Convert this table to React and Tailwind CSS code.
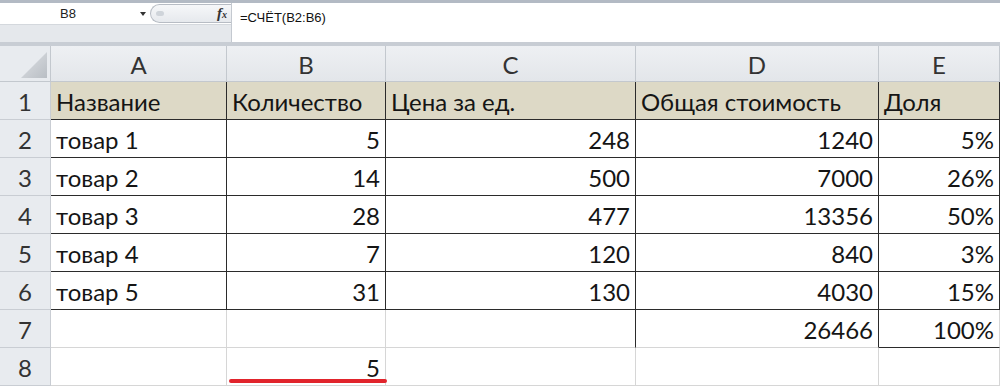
import React from "react";

const cols = ["A", "B", "C", "D", "E"];

const rows = [
  ["Название", "Количество", "Цена за ед.", "Общая стоимость", "Доля"],
  ["товар 1", "5", "248", "1240", "5%"],
  ["товар 2", "14", "500", "7000", "26%"],
  ["товар 3", "28", "477", "13356", "50%"],
  ["товар 4", "7", "120", "840", "3%"],
  ["товар 5", "31", "130", "4030", "15%"],
  ["", "", "", "26466", "100%"],
  ["", "5", "", "", ""],
];

// which cell edges carry the table's dark border
const darkRight = (r, c) => r < 6 || (r === 6 && (c === 2 || c === 3));
const darkBottom = (r, c) => r < 6 || (r === 6 && c === 4);

function DataCell({ r, c, value }) {
  const header = r === 0;
  const alignRight = !header && c > 0;
  const right = darkRight(r, c) ? "border-r-[#2b2b2b]" : "border-r-[#d6d6d6]";
  const bottom = darkBottom(r, c) ? "border-b-[#2b2b2b]" : "border-b-[#d6d6d6]";
  return (
    <div
      className={`flex items-center border-r-[1.5px] border-b-[1.5px] px-[5px] overflow-hidden whitespace-nowrap ${right} ${bottom} ${
        header ? "bg-[#ddd9c6]" : "bg-white"
      } ${alignRight ? "justify-end" : "justify-start"}`}
    >
      <span className="text-[24px] leading-none text-[#151515] pt-[2px]">{value}</span>
    </div>
  );
}

export default function App() {
  return (
    <div
      className="relative w-[1000px] h-[387px] overflow-hidden bg-white"
      style={{ fontFamily: "Lato, 'Liberation Sans', sans-serif" }}
    >
      {/* formula bar */}
      <div className="h-[3px] bg-[#b3bac4]" />
      <div className="flex h-[43px] border-b-[4px] border-[#c8cdd4]">
        <div className="w-[232px] flex flex-col border-r border-[#c4c9d0]">
          <div className="h-[21px] flex items-center bg-white">
            <div
              className="w-[136px] text-center text-[13px] text-[#222]"
              style={{ fontFamily: "'Liberation Sans', sans-serif" }}
            >
              B8
            </div>
            <div className="w-[14px] flex justify-center">
              <div className="w-0 h-0 border-l-[3px] border-r-[3px] border-t-[4px] border-l-transparent border-r-transparent border-t-[#333]" />
            </div>
            <div className="flex-1 h-[19px] flex items-center rounded-l-[10px] border border-r-0 border-[#b7bcc4] bg-gradient-to-b from-[#f6f7f9] to-[#e6e9ed] pl-[5px] pr-[4px]">
              <div className="w-[8px] h-[5px] rounded-full bg-[#cfd4da]" />
              <div className="flex-1" />
              <span
                className="text-[15px] italic font-bold text-[#333] leading-none"
                style={{ fontFamily: "'Liberation Serif', serif" }}
              >
                f<span className="text-[10px]">x</span>
              </span>
            </div>
          </div>
          <div className="flex-1 bg-[#e5e8ec] border-t border-[#d4d8dd]" />
        </div>
        <div
          className="flex-1 bg-white pl-[8px] pt-[5px] text-[13px] text-[#111]"
          style={{ fontFamily: "'Liberation Sans', sans-serif" }}
        >
          =СЧЁТ(B2:B6)
        </div>
      </div>

      {/* sheet grid */}
      <div className="grid grid-cols-[51px_176px_159px_250px_243px_121px] grid-rows-[36px_repeat(8,38px)]">
        <div className="relative bg-[#e8ebef] border-r border-b border-[#c3c8ce]">
          <svg className="absolute right-[3px] bottom-[3px]" width="26" height="26" viewBox="0 0 26 26">
            <defs>
              <linearGradient id="tri" x1="0" y1="0" x2="1" y2="1">
                <stop offset="0" stopColor="#dfe2e6" />
                <stop offset="1" stopColor="#b9bec4" />
              </linearGradient>
            </defs>
            <polygon points="26,0 26,26 0,26" fill="url(#tri)" />
          </svg>
        </div>
        {cols.map((c) => (
          <div
            key={c}
            className="flex items-center justify-center bg-gradient-to-b from-[#eef0f3] to-[#e3e6ea] border-r border-b border-[#c3c8ce] text-[24px] text-[#333] pt-[2px]"
          >
            {c}
          </div>
        ))}
        {rows.map((row, r) => (
          <React.Fragment key={r}>
            <div className="flex items-center justify-center bg-[#e8ebef] border-r border-b border-[#c9cdd3] text-[24px] text-[#333] pt-[2px]">
              {r + 1}
            </div>
            {row.map((v, c) => (
              <DataCell key={c} r={r} c={c} value={v} />
            ))}
          </React.Fragment>
        ))}
      </div>

      {/* red underline under B8 */}
      <div className="absolute left-[229px] top-[379px] w-[158px] h-[4px] rounded-full bg-[#e1242c]" />
    </div>
  );
}
